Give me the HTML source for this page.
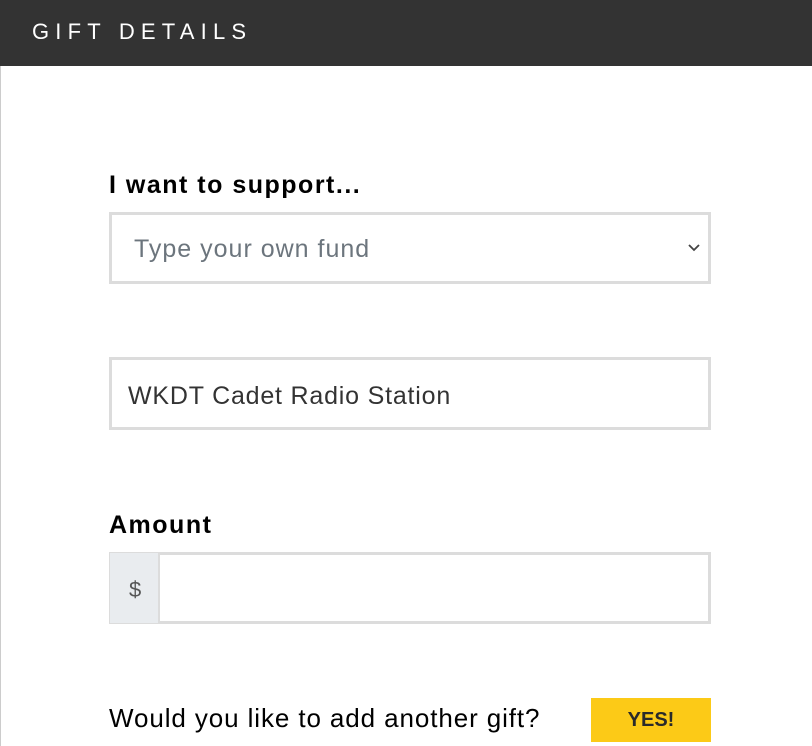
<!DOCTYPE html>
<html><head><style>
body{margin:0;width:812px;height:746px;overflow:hidden;background:#fff;font-family:"Liberation Sans",sans-serif;position:relative}
.border{position:absolute;left:0;top:0;width:1px;height:746px;background:#ccc}
.hdr{position:absolute;left:0;top:0;width:812px;height:66px;background:#333}
.hdr span{position:absolute;left:32px;top:19px;color:#fff;font-size:22px;letter-spacing:6.2px}
.lbl{position:absolute;left:109px;font-weight:bold;font-size:25px;color:#000;letter-spacing:1.5px}
.box{position:absolute;left:109px;width:596px;border:3px solid #dcdcdc;background:#fff;box-sizing:content-box}
.t{position:absolute;font-size:25px}
</style></head><body>
<div class="border"></div>
<div class="hdr"><span>GIFT DETAILS</span></div>
<div class="lbl" style="top:171px">I want to support...</div>
<div class="box" style="top:212px;height:66px">
 <div class="t" style="left:22px;top:20px;color:#6c757d;letter-spacing:1px">Type your own fund</div>
 <svg style="position:absolute;right:8px;top:29px" width="12" height="8" viewBox="0 0 12 8"><path d="M1 1l5 5 5-5" stroke="#444" stroke-width="1.8" fill="none"/></svg>
</div>
<div class="box" style="top:357px;height:67px">
 <div class="t" style="left:16px;top:22px;color:#333;letter-spacing:0.8px">WKDT Cadet Radio Station</div>
</div>
<div class="lbl" style="top:511px;letter-spacing:1.5px">Amount</div>
<div class="box" style="top:552px;height:66px">
 <div style="position:absolute;left:-2px;top:-2px;width:48px;height:70px;background:#e9ecef;border-right:2px solid #dcdcdc"></div>
 <div class="t" style="left:17px;top:22px;color:#555;font-size:22px">$</div>
</div>
<div style="position:absolute;left:109px;top:703px;font-size:26px;color:#000;letter-spacing:0.9px">Would you like to add another gift?</div>
<div style="position:absolute;left:591px;top:698px;width:120px;height:44px;background:#fcca17;color:#2a2a2a;font-weight:bold;font-size:20px;text-align:center;line-height:44px">YES!</div>
</body></html>
